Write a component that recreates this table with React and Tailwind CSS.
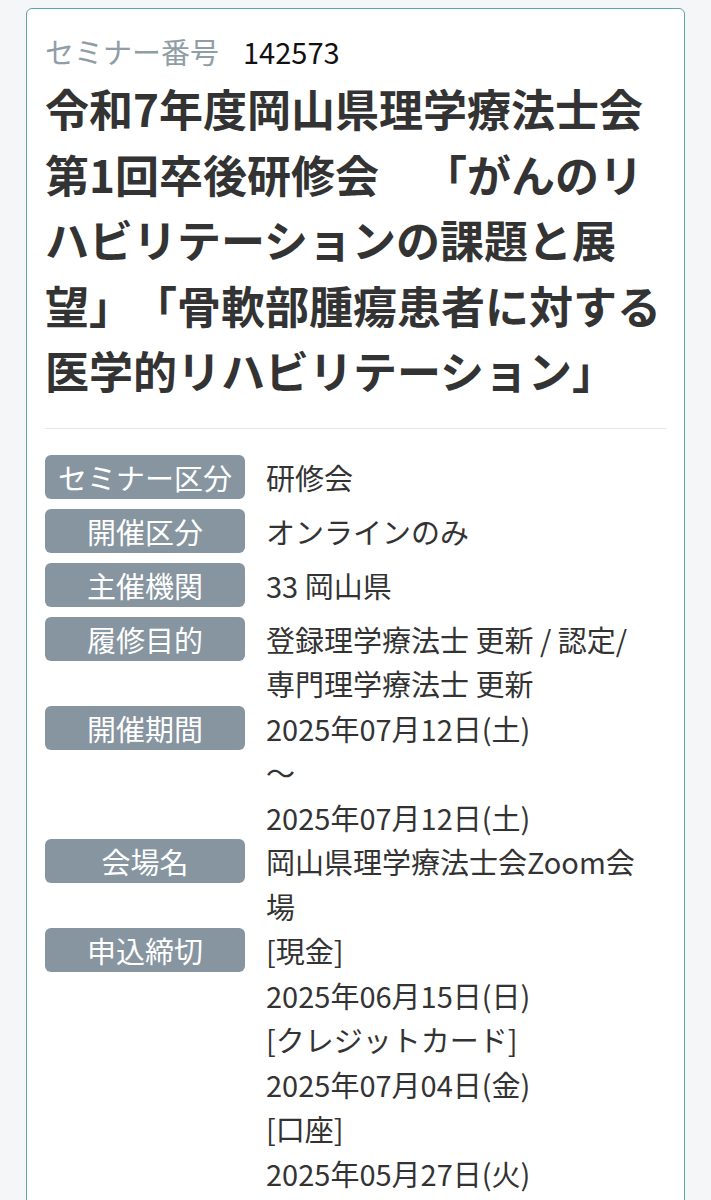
import React from 'react'

const rows = [
    { label: 'セミナー区分', values: ['研修会'] },
    { label: '開催区分', values: ['オンラインのみ'] },
    { label: '主催機関', values: ['33 岡山県'] },
    { label: '履修目的', values: ['登録理学療法士 更新 / 認定/専門理学療法士 更新'] },
    { label: '開催期間', values: ['2025年07月12日(土)', '〜', '2025年07月12日(土)'] },
    { label: '会場名', values: ['岡山県理学療法士会Zoom会場'] },
    { label: '申込締切', values: ['[現金]', '2025年06月15日(日)', '[クレジットカード]', '2025年07月04日(金)', '[口座]', '2025年05月27日(火)'] },
]

function InfoRow({ label, values }) {
    return (
        <div className="flex items-start gap-[21px]">
            <div className="w-[200px] h-[44px] mb-[10px] shrink-0 rounded-md bg-[#8695a0] text-white text-center text-[29px] leading-[44px]">
                {label}
            </div>
            <div className="w-[380px] text-[29px] leading-[44.5px] text-[#333]">
                {values.map((v, i) => (
                    <div key={i}>{v}</div>
                ))}
            </div>
        </div>
    )
}

function App() {
    return (
        <div className="min-h-screen bg-[#f4f6f7] pt-[8px] px-[26px] [text-spacing-trim:space-all]" style={{ fontFamily: '"Noto Sans CJK JP", "Noto Sans", sans-serif' }}>
            <div className="bg-white border border-[#5fa6a2] rounded-t-md px-[18px] pt-[20px] pb-10">
                <div className="flex items-baseline text-[29px] leading-[45px]">
                    <span className="text-[#8f9ea6]">セミナー番号</span>
                    <span className="ml-[24px] text-[#111]">142573</span>
                </div>

                <h1 className="mt-[2px] text-[44px] leading-[65.5px] font-bold text-[#333]">
                    令和7年度岡山県理学療法士会第1回卒後研修会　「がんのリハビリテーションの課題と展望」「骨軟部腫瘍患者に対する医学的リハビリテーション」
                </h1>

                <hr className="mt-[24px] mb-[26px] border-t border-[#e6e6e6]" />

                <div className="flex flex-col">
                    {rows.map((r) => (
                        <InfoRow key={r.label} label={r.label} values={r.values} />
                    ))}
                </div>
            </div>
        </div>
    )
}

export default App
